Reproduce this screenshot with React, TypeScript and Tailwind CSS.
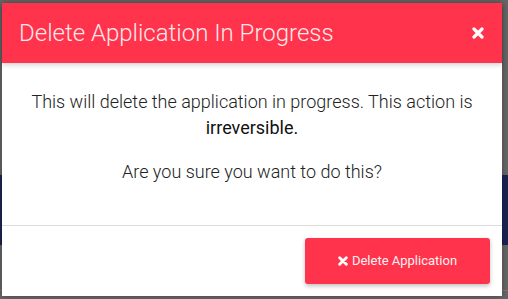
import React from "react";

export default function App() {
  return (
    <div className="relative w-[508px] h-[299px] overflow-hidden bg-[#666666]" style={{ fontFamily: "Roboto, 'Liberation Sans', sans-serif" }}>
      <div className="h-[175px]" />
      <div className="h-[70px] bg-[#1c2352]" />
      <div className="h-[45px]" />
      <div className="h-px bg-[#7a7a7a]" />

      <div className="absolute left-[2px] top-[3px] w-[500px] h-[293px] bg-white flex flex-col shadow-[0_0_6px_rgba(0,0,0,0.35)]">
        <div className="h-[60px] bg-[#ff334b] flex items-center justify-between pl-[17px] pr-[17px] shadow-[0_2px_5px_rgba(0,0,0,0.18)] relative z-10">
          <span className="text-[24px] font-light text-[#fde8eb] leading-none">Delete Application In Progress</span>
          <svg width="12" height="12" viewBox="0 0 12 12" className="mr-[1px]">
            <path d="M2 2 L10 10 M10 2 L2 10" stroke="#ffffff" strokeWidth="3.2" strokeLinecap="round" />
          </svg>
        </div>
        <div className="pt-[26px] pb-[40px] px-[10px] text-center text-[#222] text-[18px] font-light leading-[26px]">
          <p className="mb-[18px] whitespace-nowrap">
            This will delete the application in progress. This action is<br />
            <span className="font-normal text-[#111]">irreversible.</span>
          </p>
          <p>Are you sure you want to do this?</p>
        </div>
        <div className="h-px bg-[#dcdcdc]" />
        <div className="flex justify-end pt-[12px] pr-[12px]">
          <button className="w-[185px] h-[46px] rounded-[3px] bg-[#ff334b] text-[#fdf0f2] text-[13px] flex items-center justify-center gap-[4px] shadow-[0_2px_4px_rgba(0,0,0,0.25)]">
            <svg width="10" height="10" viewBox="0 0 12 12">
              <path d="M2 2 L10 10 M10 2 L2 10" stroke="#ffffff" strokeWidth="3.4" strokeLinecap="round" />
            </svg>
            <span>Delete Application</span>
          </button>
        </div>
      </div>
    </div>
  );
}
